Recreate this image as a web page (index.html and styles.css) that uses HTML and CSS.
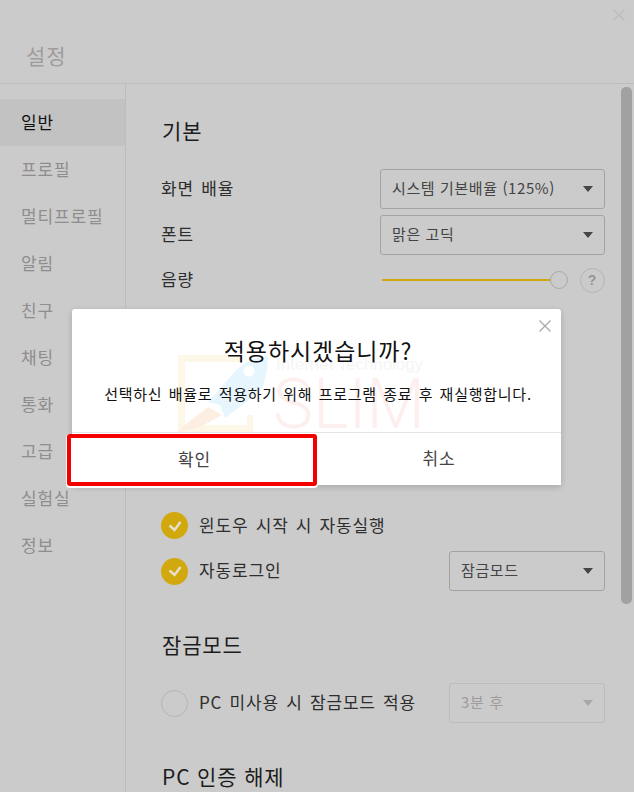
FILE: index.html
```html
<!DOCTYPE html>
<html lang="ko">
<head>
<meta charset="utf-8">
<title>설정</title>
<link rel="stylesheet" href="styles.css">
</head>
<body>
<div class="app">
  <svg class="win-close" width="14" height="14" viewBox="0 0 14 14"><path d="M1.5 1.5l11 11M12.5 1.5l-11 11" stroke="#bcbcbc" stroke-width="1.2" fill="none"/></svg>
  <header class="top"><h1>설정</h1></header>
  <div class="body">
    <nav class="side">
      <a class="on">일반</a><a>프로필</a><a>멀티프로필</a><a>알림</a><a>친구</a><a>채팅</a><a>통화</a><a>고급</a><a>실험실</a><a>정보</a>
    </nav>
    <main class="main">
      <h2 class="h-basic">기본</h2>
      <div class="row r1"><span class="lab">화면 배율</span><div class="sel wide"><span>시스템 기본배율 (125%)</span><i class="arr"></i></div></div>
      <div class="row r2"><span class="lab">폰트</span><div class="sel wide"><span>맑은 고딕</span><i class="arr"></i></div></div>
      <div class="row r3"><span class="lab">음량</span>
        <div class="vol"><div class="track"></div><div class="knob"></div><div class="help">?</div></div>
      </div>
      <div class="spacer"></div>
      <div class="row chk c1"><span class="tick"><svg width="16" height="12" viewBox="0 0 16 12"><path d="M2.5 5.5l5 4.5 6-8" stroke="#e6e1cf" stroke-width="2.4" fill="none"/></svg></span><span class="lab">윈도우 시작 시 자동실행</span></div>
      <div class="row chk c2"><span class="tick"><svg width="16" height="12" viewBox="0 0 16 12"><path d="M2.5 5.5l5 4.5 6-8" stroke="#e6e1cf" stroke-width="2.4" fill="none"/></svg></span><span class="lab">자동로그인</span><div class="sel narrow"><span>잠금모드</span><i class="arr"></i></div></div>
      <h2 class="h-lock">잠금모드</h2>
      <div class="row chk c3"><span class="tick off"></span><span class="lab">PC 미사용 시 잠금모드 적용</span><div class="sel narrow dis"><span>3분 후</span><i class="arr"></i></div></div>
      <h2 class="h-pc">PC 인증 해제</h2>
    </main>
    <div class="thumb"></div>
  </div>
  <section class="modal">
    <svg class="mark" width="260" height="100" viewBox="172 350 260 100">
      <path d="M178 355h62v7h-55v63h62v-10h6v17h-75z" fill="#fdf7e8"/>
      <path d="M268 356c-14 1-28 8-37 20l-23 26 12 3 5 13 20-15 17-15c4-10 6-21 6-32z" fill="#e7f6fe"/>
      <circle cx="249" cy="371" r="5.5" fill="#fff"/>
      <path d="M208 407l-23 18-7 7 20-4 24-13z" fill="#fdeee2"/>
      <text x="273" y="428" class="mark-big" textLength="152" lengthAdjust="spacingAndGlyphs">SLIM</text>
      <text x="276" y="370" class="mark-small" textLength="147" lengthAdjust="spacingAndGlyphs">Internet Technology</text>
    </svg>
    <svg class="m-close" width="14" height="14" viewBox="0 0 14 14"><path d="M1.5 1.5l11 11M12.5 1.5l-11 11" stroke="#a8a8a8" stroke-width="1.3" fill="none"/></svg>
    <h3>적용하시겠습니까?</h3>
    <p>선택하신 배율로 적용하기 위해 프로그램 종료 후 재실행합니다.</p>
    <div class="btns"><button class="ok">확인</button><button class="no">취소</button></div>
  </section>
</div>
</body>
</html>
```
FILE: styles.css
```css
* { box-sizing: border-box; }
html, body { margin: 0; height: 100%; }
body { background: #cbcbcb; font-family: "Noto Sans CJK KR", "Noto Sans", sans-serif; overflow: hidden; }
.app { position: relative; width: 634px; height: 792px; overflow: hidden; background: #cbcbcb; }
.win-close { position: absolute; left: 612px; top: 8px; }
.top { height: 84px; border-bottom: 1px solid #bdbdbd; padding: 41px 0 0 26px; }
.top h1 { margin: 0; font-size: 21px; letter-spacing: .04em; line-height: 29px; font-weight: 400; color: #a09c9c; }
.body { display: flex; height: 708px; position: relative; }
.side { width: 126px; flex: none; border-right: 1px solid #bdbdbd; padding-top: 15px; display: flex; flex-direction: column; }
.side a { flex: none; height: 47px; line-height: 45px; padding-left: 21px; font-size: 17px; letter-spacing: .05em; color: #8f8d8d; }
.side a.on { background: #c2c2c2; color: #111; }
.main { flex: 1; padding: 0 29px 0 35px; display: flex; flex-direction: column; }
h2 { margin: 0; flex: none; height: 28px; padding-left: 1px; font-size: 21px; letter-spacing: .04em; line-height: 26px; font-weight: 400; color: #1c1c1c; }
.h-basic { margin-top: 33px; }
.row { display: flex; flex: none; align-items: center; justify-content: space-between; font-size: 17px; letter-spacing: .05em; word-spacing: 1.6px; color: #2e2e2e; }
.lab { padding-bottom: 3px; }
.r1 { margin-top: 24px; height: 40px; }
.r2 { margin-top: 6px; height: 40px; }
.r3 { margin-top: 5px; height: 40px; }
.sel { height: 40px; border: 1px solid #a3a3a3; border-radius: 3px; display: flex; align-items: center; justify-content: space-between; padding: 0 11px 0 11px; font-size: 15px; letter-spacing: .04em; word-spacing: 0; color: #444; }
.sel span { padding-bottom: 3px; }
.sel.wide { width: 225px; }
.sel.narrow { width: 156px; margin-left: auto; }
.sel.dis { border-color: #bcbcbc; color: #a09c9c; }
.arr { width: 0; height: 0; border-left: 5px solid transparent; border-right: 5px solid transparent; border-top: 6px solid #444; flex: none; }
.dis .arr { border-top-color: #a8a8a8; }
.vol { width: 225px; height: 26px; display: flex; align-items: center; position: relative; padding-left: 2px; }
.track { width: 168px; height: 2px; background: #cfa80e; }
.knob { width: 18px; height: 18px; border: 1px solid #a9a9a9; border-radius: 50%; flex: none; }
.help { width: 25px; height: 25px; margin-left: 12px; border: 1px solid #b5b5b5; border-radius: 50%; text-align: center; font: 700 14px/23px "Liberation Sans", sans-serif; color: #9a9494; flex: none; }
.spacer { height: 212px; flex: none; }
.chk { justify-content: flex-start; }
.tick { width: 27px; height: 27px; border-radius: 50%; background: #d1a90e; display: flex; align-items: center; justify-content: center; margin-right: 11px; flex: none; }
.tick.off { background: none; border: 1px solid #b5b5b5; }
.c1 { height: 27px; }
.c2 { height: 40px; margin-top: 12px; }
.h-lock { margin-top: 40px; }
.c3 { height: 40px; margin-top: 24px; }
.h-pc { margin-top: 40px; }
.thumb { position: absolute; right: 2px; top: 3px; width: 11px; height: 517px; background: #a1a1a1; border-radius: 5px; }
.modal { position: absolute; left: 72px; top: 309px; width: 489px; height: 176px; background: #fff; border-radius: 3px; box-shadow: 0 2px 6px rgba(0,0,0,.18); display: flex; flex-direction: column; align-items: center; }
.mark { position: absolute; left: 100px; top: 41px; }
.mark-big { font: 300 71px "Roboto", "Liberation Sans", sans-serif; fill: #feefef; }
.mark-small { font: 400 16px "Liberation Sans", sans-serif; fill: #f5f5f5; }
.m-close { position: absolute; right: 9px; top: 10px; }
.modal h3 { position: relative; margin: 26px 0 0; padding-left: 3px; font-size: 23px; letter-spacing: .04em; line-height: 30px; font-weight: 400; color: #111; }
.modal p { position: relative; margin: 18px 0 0; padding-left: 3px; font-size: 15px; letter-spacing: .05em; word-spacing: 1.4px; line-height: 22px; color: #111; }
.btns { position: relative; margin-top: auto; width: 100%; height: 53px; display: flex; border-top: 1px solid #e4e4e4; background: #fff; }
.btns button { flex: 1; background: none; border: 0; padding: 0 0 3px; font: 400 17px "Noto Sans CJK KR", sans-serif; letter-spacing: .05em; color: #444; }
.btns .ok { flex: none; width: 250px; height: 52px; margin: 1px 0 0 -5px; padding-left: 5px; border: 4px solid #f50000; border-radius: 3px; background: #fff; box-shadow: 0 1px 0 1px #fff; position: relative; }
```
